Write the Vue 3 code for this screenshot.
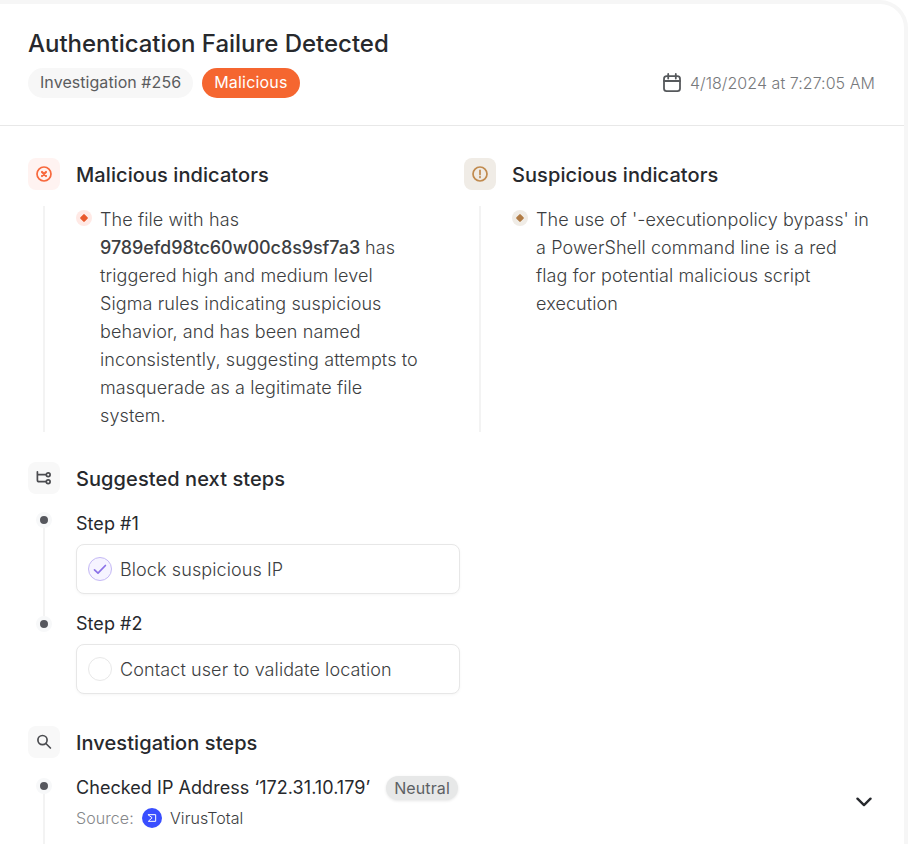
<template>
  <main class="panel">
    <!-- Header -->
    <header class="head">
      <h1 class="title">Authentication Failure Detected</h1>
      <div class="head-row">
        <div class="tags">
          <span class="tag">Investigation #256</span>
          <span class="tag danger">Malicious</span>
        </div>
        <div class="date">
          <svg viewBox="0 0 20 20" class="calendar" aria-hidden="true">
            <rect x="2" y="3.2" width="16" height="15" rx="2.6" />
            <path d="M2 8h16M6.2 1v4.6M13.8 1v4.6" />
          </svg>
          <span>4/18/2024 at 7:27:05 AM</span>
        </div>
      </div>
    </header>

    <div class="body">
      <!-- Indicators -->
      <div class="indicators">
        <section v-for="g in indicators" :key="g.kind" :class="g.kind">
          <div class="section-head">
            <span class="section-ico">
              <svg viewBox="0 0 16 16" aria-hidden="true">
                <circle cx="8" cy="8" r="7" />
                <path v-if="g.kind === 'malicious'" class="mark" d="m6 6 4 4m0-4-4 4" />
                <path v-else class="mark" d="M8 4.3v4.2M8 10.7v.7" />
              </svg>
            </span>
            <h2>{{ g.title }}</h2>
          </div>
          <div class="indicator">
            <span class="rail"></span>
            <span class="bullet"><i></i></span>
            <p>
              <span v-for="line in g.lines" :key="line.text" class="text-line">
                <b v-if="line.hash">{{ line.hash }}</b>
                <span>{{ line.text }}</span>
              </span>
            </p>
          </div>
        </section>
      </div>

      <!-- Suggested next steps -->
      <section class="next">
        <div class="section-head">
          <span class="section-ico">
            <svg viewBox="0 0 16 16" class="tree" aria-hidden="true">
              <path d="M1.4 1.8v8.1c0 1.1.7 1.8 1.8 1.8h7M1.4 4.7h8.8" />
              <circle cx="12.2" cy="4.7" r="1.9" />
              <circle cx="12.2" cy="11.7" r="1.9" />
            </svg>
          </span>
          <h2>Suggested next steps</h2>
        </div>
        <div v-for="s in steps" :key="s.id" class="step">
          <div class="track"><span class="dot"></span><span class="line"></span></div>
          <div class="step-main">
            <h3>Step #{{ s.id }}</h3>
            <button class="task" type="button" @click="s.done = !s.done">
              <span class="check" :class="{ done: s.done }">
                <svg v-if="s.done" viewBox="0 0 14 14" aria-hidden="true">
                  <path d="m1.5 7.8 3.5 3.4 7.4-7.7" />
                </svg>
              </span>
              {{ s.text }}
            </button>
          </div>
        </div>
      </section>

      <!-- Investigation steps -->
      <section class="investigation">
        <div class="section-head">
          <span class="section-ico">
            <svg viewBox="0 0 16 16" class="search" aria-hidden="true">
              <circle cx="6.5" cy="6.1" r="4.6" />
              <path d="m9.9 9.5 4.5 4.5" />
            </svg>
          </span>
          <h2>Investigation steps</h2>
        </div>
        <div class="finding">
          <div class="track"><span class="dot"></span><span class="line"></span></div>
          <div class="finding-main">
            <div class="finding-title">
              <h3>Checked IP Address ‘172.31.10.179’</h3>
              <span class="neutral">Neutral</span>
            </div>
            <div class="source">
              <span class="source-label">Source:</span>
              <span class="vt">
                <svg viewBox="0 0 12 12" aria-hidden="true">
                  <path d="M1.6 2h8.8v8H1.6L5.8 6Z" />
                </svg>
              </span>
              <span class="source-name">VirusTotal</span>
            </div>
          </div>
          <button class="expand" type="button" aria-label="Expand step">
            <svg viewBox="0 0 16 10" aria-hidden="true"><path d="m1.5 1.7 6.5 6.4 6.5-6.4" /></svg>
          </button>
        </div>
      </section>
    </div>
  </main>
</template>

<script setup>
import { ref } from "vue";

const indicators = [
  {
    kind: "malicious",
    title: "Malicious indicators",
    lines: [
      { text: "The file with has" },
      { hash: "9789efd98tc60w00c8s9sf7a3", text: "has" },
      { text: "triggered high and medium level" },
      { text: "Sigma rules indicating suspicious" },
      { text: "behavior, and has been named" },
      { text: "inconsistently, suggesting attempts to" },
      { text: "masquerade as a legitimate file" },
      { text: "system." },
    ],
  },
  {
    kind: "suspicious",
    title: "Suspicious indicators",
    lines: [
      { text: "The use of '-executionpolicy bypass' in" },
      { text: "a PowerShell command line is a red" },
      { text: "flag for potential malicious script" },
      { text: "execution" },
    ],
  },
];

const steps = ref([
  { id: 1, text: "Block suspicious IP", done: true },
  { id: 2, text: "Contact user to validate location", done: false },
]);
</script>

<style>
body{
  margin: 0;
  background: #fff;
  overflow: hidden;
}
</style>

<style scoped>
.panel{
  box-sizing: border-box;
  width: 908px;
  height: 844px;
  overflow: hidden;
  border: solid #f6f6f6;
  border-width: 4px 4px 0 0;
  border-top-right-radius: 28px;
  background: #fff;
  font-family: Inter, "Liberation Sans", sans-serif;
  color: #27292d;
}
svg{ display: block; fill: none; stroke: currentColor; stroke-linecap: round; stroke-linejoin: round; }
h1, h2, h3, p{ margin: 0; }
button{ font: inherit; color: inherit; cursor: pointer; }

/* ===== Header ===== */
.head{
  box-sizing: border-box;
  height: 122px;
  padding: 24px 29px 0 28px;
  border-bottom: 1px solid #e8e8e8;
}
.title{
  font-size: 24px;
  line-height: 32px;
  font-weight: 500;
  letter-spacing: -.02px;
  white-space: nowrap;
}
.head-row{
  margin-top: 8px;
  display: flex;
  justify-content: space-between;
  align-items: center;
}
.tags{ display: flex; gap: 9px; }
.tag{
  height: 30px;
  padding: 0 12px;
  border-radius: 15px;
  background: #f7f7f7;
  color: #5b5c5e;
  font-size: 16px;
  line-height: 29px;
  letter-spacing: .06px;
}
.tag.danger{ background: #f56630; color: #fff; letter-spacing: .2px; }
.date{
  display: flex;
  align-items: center;
  gap: 8px;
  font-size: 16px;
  font-weight: 300;
  letter-spacing: .05px;
  color: #77797c;
}
.calendar{ width: 20px; height: 20px; stroke-width: 1.8; color: #56595c; }

/* ===== Sections ===== */
.body{ padding: 32px 28px 0; }
.section-head{
  display: flex;
  align-items: center;
  gap: 16px;
}
.section-head h2{
  font-size: 20px;
  line-height: 32px;
  font-weight: 500;
  letter-spacing: .08px;
  position: relative;
  top: 1px;
}
.section-ico{
  width: 32px;
  height: 32px;
  border-radius: 8px;
  background: #f8f8f8;
  color: #4b4c50;
  display: flex;
  align-items: center;
  justify-content: center;
}
.section-ico svg{ width: 16px; height: 16px; stroke-width: 1.7; }

/* ===== Indicators ===== */
.indicators{
  display: grid;
  grid-template-columns: 412px 412px;
  gap: 24px;
}
.malicious .section-ico{ background: #fff3f1; color: #f8683c; }
.suspicious .section-ico{ background: #f0ece6; color: #c08a4e; }
.malicious .mark{ stroke-width: 2.2; }
.indicator{
  margin-top: 16px;
  display: flex;
  height: 226px;
}
.rail{
  width: 2px;
  margin: 0 31px 0 15px;
  background: #f3f3f3;
}
.bullet{
  width: 16px;
  height: 16px;
  margin: 4px 8px 0 0;
  border-radius: 50%;
  display: flex;
  align-items: center;
  justify-content: center;
  background: #ffe9e5;
}
.bullet i{
  width: 6px;
  height: 6px;
  border-radius: 1px;
  background: #e9592c;
  transform: rotate(45deg);
}
.suspicious .bullet{ background: #f0ece6; }
.suspicious .bullet i{ background: #b17c45; }
.indicator p{
  font-size: 18px;
  line-height: 28px;
  font-weight: 300;
  letter-spacing: .1px;
  color: #3c3e41;
}
.text-line{ display: flex; gap: 5px; white-space: nowrap; }
.indicator b{ font-weight: 500; letter-spacing: -.08px; color: #3c3e42; }

/* ===== Steps ===== */
.next{ margin-top: 30px; }
.step{ display: flex; height: 100px; }
.next .section-head, .investigation .section-head{ margin-bottom: 16px; }
.track{
  width: 32px;
  margin-right: 16px;
  padding-top: 2px;
  display: flex;
  flex-direction: column;
  align-items: center;
}
.dot{
  flex: none;
  box-sizing: border-box;
  width: 16px;
  height: 16px;
  border-radius: 50%;
  border: 4px solid #f7f8f9;
  background: #56575d;
}
.line{ flex: 1; width: 2px; background: #f3f3f3; }
.step:last-child .line{ display: none; }
.step:last-child .track{ padding-top: 6px; }
.step .line{ margin-bottom: -6px; }
h3{
  font-size: 18px;
  line-height: 28px;
  font-weight: 400;
  letter-spacing: .05px;
}
.task{
  box-sizing: border-box;
  width: 384px;
  height: 50px;
  margin-top: 6px;
  padding: 0 11px;
  border: 1px solid #e7e7e7;
  border-radius: 8px;
  background: #fff;
  box-shadow: 0 1px 3px rgba(0,0,0,.04);
  display: flex;
  align-items: center;
  gap: 8px;
  font-size: 18px;
  font-weight: 300;
  letter-spacing: .1px;
  color: #3c3e41;
}
.check{
  box-sizing: border-box;
  width: 24px;
  height: 24px;
  border: 1px solid #e8e8e8;
  border-radius: 50%;
  display: flex;
  align-items: center;
  justify-content: center;
}
.check.done{ border-color: #c4b8f5; background: #f6f4ff; color: #8b72e8; }
.check svg{ width: 14px; height: 14px; stroke-width: 1.7; }

/* ===== Investigation ===== */
.investigation{ margin-top: 16px; }
.finding{ display: flex; height: 100px; }
.finding .track{ padding-top: 4px; }
.finding-title{ display: flex; align-items: center; gap: 16px; }
.neutral{
  height: 24px;
  padding: 0 8px;
  border-radius: 12px;
  background: #e7e8e8;
  color: #5c6063;
  font-size: 16px;
  line-height: 24px;
  letter-spacing: .1px;
  box-shadow: 0 1px 3px rgba(0,0,0,.1);
}
.source{
  margin-top: 6px;
  height: 20px;
  display: flex;
  align-items: center;
  font-size: 16px;
  font-weight: 300;
  letter-spacing: .08px;
  color: #3c3e41;
}
.source-label{ width: 58px; color: #85878a; }
.vt{
  width: 20px;
  height: 20px;
  margin: 0 8px;
  border-radius: 50%;
  background: #394eff;
  color: #fff;
  display: flex;
  align-items: center;
  justify-content: center;
}
.vt svg{ width: 10px; height: 10px; stroke-width: 1.2; stroke-linejoin: miter; }
.expand{
  width: 24px;
  height: 24px;
  margin: 16px 0 0 auto;
  padding: 0;
  border: 0;
  background: none;
  display: flex;
  align-items: center;
  justify-content: center;
}
.expand svg{ width: 16px; height: 10px; stroke-width: 2.4; }
</style>
